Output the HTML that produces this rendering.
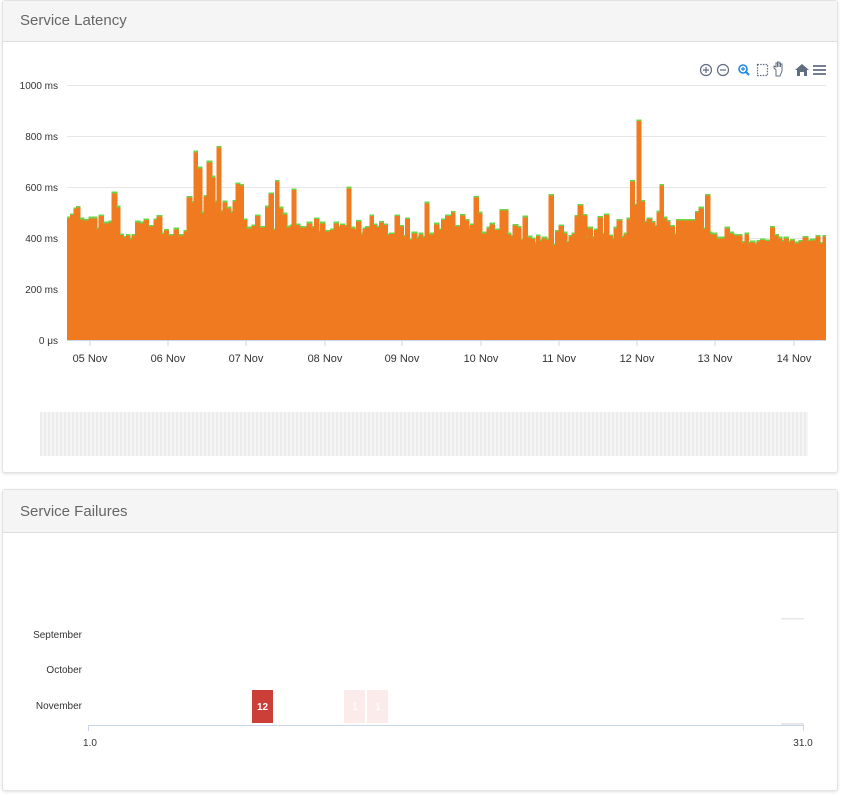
<!DOCTYPE html>
<html><head><meta charset="utf-8"><style>
*{box-sizing:border-box}
body{margin:0;width:856px;height:800px;background:#fff;font-family:"Liberation Sans",sans-serif;position:relative;overflow:hidden}
.card{position:absolute;left:2px;width:836px;background:#fff;border:1px solid #e3e3e3;border-radius:3px;box-shadow:0 1px 3px rgba(0,0,0,.12)}
.hd{height:41px;background:#f5f5f5;border-bottom:1px solid #ddd;color:#666;font-size:15px;padding:11px 0 0 17px}
</style></head><body>
<div class="card" style="top:0;height:473px"><div class="hd">Service Latency</div></div>
<div class="card" style="top:489px;height:302px"><div class="hd" style="height:43px;padding-top:13px">Service Failures</div></div>

<svg id="ch" width="856" height="800" style="position:absolute;left:0;top:0">
<g stroke="#e6e6e6" stroke-width="1">
<line x1="67" x2="826" y1="85.5" y2="85.5"/><line x1="67" x2="826" y1="136.5" y2="136.5"/>
<line x1="67" x2="826" y1="187.5" y2="187.5"/><line x1="67" x2="826" y1="238.5" y2="238.5"/>
<line x1="67" x2="826" y1="289.5" y2="289.5"/>
</g>
<g id="bars" shape-rendering="crispEdges"></g>
<line x1="67" x2="826" y1="340.5" y2="340.5" stroke="#ccd6eb"/>
<g stroke="#ccd6eb">
<line x1="90" x2="90" y1="341" y2="346"/><line x1="168" x2="168" y1="341" y2="346"/><line x1="246" x2="246" y1="341" y2="346"/><line x1="325" x2="325" y1="341" y2="346"/><line x1="402" x2="402" y1="341" y2="346"/><line x1="481" x2="481" y1="341" y2="346"/><line x1="559" x2="559" y1="341" y2="346"/><line x1="637" x2="637" y1="341" y2="346"/><line x1="715" x2="715" y1="341" y2="346"/><line x1="794" x2="794" y1="341" y2="346"/>
</g>
<g font-family="Liberation Sans" font-size="10" fill="#333" text-anchor="end">
<text x="58" y="89">1000 ms</text><text x="58" y="140">800 ms</text><text x="58" y="191">600 ms</text><text x="58" y="242">400 ms</text><text x="58" y="293">200 ms</text><text x="58" y="344">0 μs</text>
</g>
<g font-family="Liberation Sans" font-size="11" fill="#333" text-anchor="middle">
<text x="90" y="362">05 Nov</text><text x="168" y="362">06 Nov</text><text x="246" y="362">07 Nov</text><text x="325" y="362">08 Nov</text><text x="402" y="362">09 Nov</text><text x="481" y="362">10 Nov</text><text x="559" y="362">11 Nov</text><text x="637" y="362">12 Nov</text><text x="715" y="362">13 Nov</text><text x="794" y="362">14 Nov</text>
</g>
<g fill="none" stroke="#606c80" stroke-width="1.2">
<circle cx="706" cy="70" r="5.5"/><path d="M703 70h6M706 67v6"/>
<circle cx="723" cy="70" r="5.5"/><path d="M720 70h6"/>
<circle cx="743" cy="69" r="4" stroke="#1e88e5" stroke-width="1.6"/><path d="M746 72l3 3" stroke="#1e88e5" stroke-width="2"/><path d="M741 69h4M743 67v4" stroke="#1e88e5"/>
<rect x="757.5" y="64.5" width="10" height="11" stroke-dasharray="1.5 1.2"/>
<path d="M776 76v-6l-2-2v-2l2 1v-4h1.5v4-5h1.5v5-4h1.5v4-3h1.5v7l-2 5z" stroke-width="1"/>
</g>
<path d="M795 70l7-6 7 6h-2v6h-3v-4h-4v4h-3v-6z" fill="#606c80"/>
<g stroke="#606c80" stroke-width="1.8"><path d="M813 66h13M813 70h13M813 74h13"/></g>
<g font-family="Liberation Sans" font-size="10" fill="#333" text-anchor="end">
<text x="82" y="638">September</text><text x="82" y="673">October</text><text x="82" y="709">November</text>
</g>
<line x1="88" x2="804" y1="725.5" y2="725.5" stroke="#ccd6eb"/>
<line x1="88.5" x2="88.5" y1="725" y2="731" stroke="#ccd6eb"/><line x1="803.5" x2="803.5" y1="725" y2="731" stroke="#ccd6eb"/>
<rect x="781" y="618" width="23" height="1.5" fill="#e8e8e8"/><rect x="781" y="723" width="23" height="2" fill="#e8e8e8"/>
<g font-family="Liberation Sans" font-size="10" fill="#333" text-anchor="middle"><text x="90" y="746">1.0</text><text x="803" y="746">31.0</text></g>
<rect x="252" y="690" width="21" height="33" fill="#cc3f38"/>
<text x="262.5" y="710" font-family="Liberation Sans" font-size="10" font-weight="bold" fill="#fff" text-anchor="middle">12</text>
<rect x="344" y="690" width="21" height="33" fill="#fbeceb"/><rect x="367" y="690" width="21" height="33" fill="#fbeceb"/>
<g font-family="Liberation Sans" font-size="10" fill="#fff" text-anchor="middle"><text x="355" y="710">1</text><text x="378" y="710">1</text></g>
</svg>
<div style="position:absolute;left:40px;top:412px;width:768px;height:44px;background:repeating-linear-gradient(90deg,#ececec 0 2px,#f5f5f5 2px 4px)"></div>
<script>
var z3=[[20,320],[30,310],[40,292],[48,288],[60,323],[72,327],[85,320],[110,352],[115,313],[130,335],[145,332],[155,245],[170,287],[180,370],[190,378],[198,372],[210,383],[215,372],[225,332],[240,335],[250,325],[265,345],[280,325],[290,315],[305,367],[312,357],[325,372],[340,353],[355,372],[370,360],[380,258],[395,273],[400,122],[412,170],[425,305],[430,255],[440,152],[455,197],[465,272],[470,108],[483,300],[487,272],[500,290],[512,303],[517,270],[527,217],[540,222],[550,325],[560,350],[575,343],[585,313],[600,348],[615,287],[625,247],[640,355],[645,210],[657,290],[668,308],[680,347],[690,343],[695,235],[708,340],[720,348],[740,335],[755,348],[762,322],[777,362],[780,335],[795,360],[810,355],[820,335],[835,348],[840,340],[855,345],[860,230],[873,350],[885,355],[888,330],[903,368],[908,352],[915,348],[928,313],[940,340],[950,348],[957,333],[970,340],[982,370],[987,367],[1003,313],[1018,345],[1030,375],[1035,322],[1048,385],[1055,365],[1070,380],[1075,368],[1088,378],[1093,275],[1107,368],[1122,338],[1137,355],[1143,325],[1155,313]];
var z4=[[30,313],[33,303],[45,345],[60,312],[75,327],[87,350],[90,340],[100,258],[115,305],[125,365],[140,350],[148,338],[163,355],[178,297],[203,368],[213,375],[218,342],[233,348],[243,385],[248,317],[262,377],[275,382],[285,397],[288,373],[300,388],[305,380],[320,385],[325,252],[340,400],[345,360],[355,343],[370,365],[380,393],[385,375],[395,367],[403,315],[413,282],[428,312],[440,378],[443,350],[457,378],[462,355],[472,318],[487,367],[492,310],[507,373],[517,383],[520,350],[530,327],[545,378],[550,368],[560,323],[570,210],[583,280],[590,28],[603,270],[613,333],[620,322],[635,333],[645,345],[650,302],[658,222],[670,320],[680,330],[690,345],[703,368],[708,327],[765,303],[775,290],[790,352],[795,252],[810,365],[815,368],[830,380],[848,380],[853,350],[868,365],[880,370],[883,372],[905,393],[913,368],[925,395],[930,392],[945,398],[950,390],[960,385],[975,388],[990,348],[1003,372],[1015,380],[1025,390],[1030,380],[1045,392],[1050,387],[1063,395],[1075,390],[1088,378],[1103,388],[1110,386],[1127,375],[1140,396],[1147,375]];
var pts=[];z3.forEach(function(p){var x=60+p[0]/3;if(x<450)pts.push([x,110+p[1]/3])});
z4.forEach(function(p){pts.push([440+p[0]/3,110+p[1]/3])});
pts[0][0]=67;pts.push([826,0]);
var s="";for(var i=0;i<pts.length-1;i++){var x=pts[i][0],w=pts[i+1][0]-x+(i<pts.length-2?0.6:0),y=pts[i][1];
s+='<rect x="'+x+'" y="'+y+'" width="'+w+'" height="'+(340-y)+'" fill="#f07a1f"/><rect x="'+x+'" y="'+y+'" width="'+w+'" height="1.6" fill="#6bd64a"/>';}
document.getElementById("bars").innerHTML=s;
</script>
</body></html>
